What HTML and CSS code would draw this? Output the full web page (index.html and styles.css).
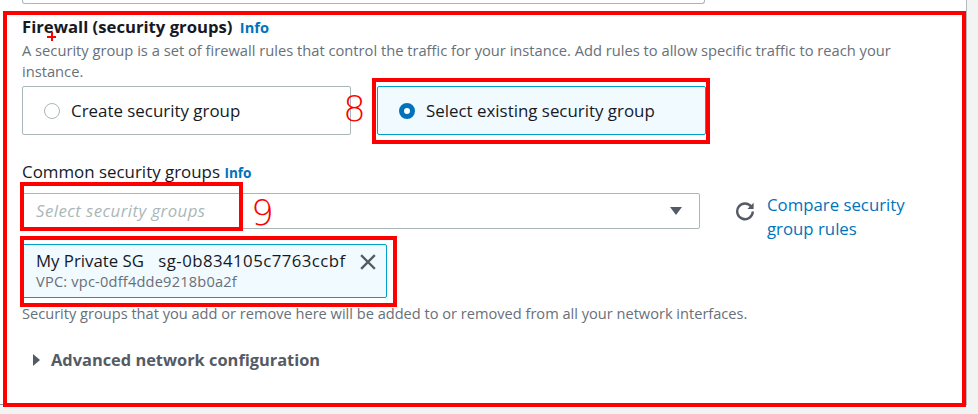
FILE: index.html
```html
<!DOCTYPE html>
<html lang="en">
<head>
<meta charset="utf-8">
<title>Firewall (security groups)</title>
<link rel="stylesheet" href="styles.css">
</head>
<body>
<div class="card">
  <div class="stub"></div>
  <section class="firewall">
    <h2 class="title">Firewall (security groups) <a class="info" href="#">Info</a></h2>
    <p class="desc">A security group is a set of firewall rules that control the traffic for your instance. Add rules to allow specific traffic to reach your instance.</p>
    <div class="tiles">
      <label class="tile"><span class="radio"></span><span>Create security group</span></label>
      <label class="tile selected"><span class="radio"></span><span>Select existing security group</span></label>
    </div>
    <div class="field-label">Common security groups <a class="info small" href="#">Info</a></div>
    <div class="select-row">
      <div class="select">
        <span class="placeholder">Select security groups</span>
        <svg class="caret" width="12" height="8" viewBox="0 0 12 8"><path d="M0 0H12L6 8Z" fill="#545b64"/></svg>
      </div>
      <a class="compare" href="#">
        <svg class="refresh" width="20" height="20" viewBox="0 0 20 20"><path d="M16.2 5.6A7.8 7.8 0 1 0 17.8 10.5" fill="none" stroke="#545b64" stroke-width="2.4"/><path d="M18.6 1.8V8H12.4Z" fill="#545b64"/></svg>
        <span class="compare-text">Compare security<br>group rules</span>
      </a>
    </div>
    <div class="token">
      <div class="token-main">
        <span class="token-name">My Private SG</span>
        <span class="token-id">sg-0b834105c7763ccbf</span>
      </div>
      <div class="token-sub">VPC: vpc-0dff4dde9218b0a2f</div>
      <svg class="token-x" width="16" height="16" viewBox="0 0 16 16"><path d="M2 2L14 14M14 2L2 14" stroke="#545b64" stroke-width="2.4" stroke-linecap="square"/></svg>
    </div>
    <p class="help">Security groups that you add or remove here will be added to or removed from all your network interfaces.</p>
    <div class="advanced"><span class="tri"></span>Advanced network configuration</div>

    <span class="mark-plus"></span>
    <span class="annot box8"></span>
    <span class="annot-num num8">8</span>
    <span class="annot box9"></span>
    <span class="annot-num num9">9</span>
    <span class="annot boxtoken"></span>
  </section>
</div>
</body>
</html>
```

FILE: styles.css
```css
html, body {
  margin: 0;
  padding: 0;
}
body {
  background: #f2f3f3;
  font-family: "Open Sans", "Noto Sans", Arial, sans-serif;
  color: #16191f;
  width: 978px;
  height: 414px;
  overflow: hidden;
}
.card {
  background: #fff;
  width: 967px;
  height: 405px;
  border-right: 1px solid #b5b9bb;
  border-bottom: 1px solid #8d9396;
  box-sizing: border-box;
  overflow: visible;
}
.stub {
  margin-left: 22px;
  width: 683px;
  height: 4px;
  box-sizing: border-box;
  border: 1px solid #aab7b8;
  border-top: none;
  border-radius: 0 0 3px 3px;
}
.firewall {
  position: relative;
  margin: 7px 0 0 3px;
  width: 963px;
  height: 396px;
  box-sizing: border-box;
  border: 4px solid #ff0000;
  padding: 2px 0 0 15px;
}
.title {
  margin: 0;
  font-size: 16.7px;
  line-height: 20px;
  font-weight: 700;
}
.info {
  color: #0073bb;
  text-decoration: none;
  font-weight: 700;
  font-size: 14.6px;
  margin-left: 3px;
}
.info.small {
  font-size: 13.6px;
  margin-left: 0;
}
.desc {
  margin: 3px 0 0 0;
  width: 895px;
  font-size: 14.7px;
  line-height: 21px;
  color: #687078;
}
.tiles {
  display: flex;
  gap: 26px;
  margin-top: 4px;
}
.tile {
  display: flex;
  align-items: center;
  gap: 11px;
  width: 329px;
  height: 49px;
  box-sizing: border-box;
  border: 1px solid #aab7b8;
  border-radius: 2px;
  padding-left: 21px;
  font-size: 16.9px;
}
.radio {
  width: 16px;
  height: 16px;
  box-sizing: border-box;
  border: 1.5px solid #aab7b8;
  border-radius: 50%;
  background: #fff;
}
.tile.selected {
  background: #f1faff;
  border-color: #00a1c9;
}
.tile.selected .radio {
  border: 5px solid #0073bb;
}
.field-label {
  margin-top: 27px;
  font-size: 16.9px;
  line-height: 20px;
}
.select-row {
  display: flex;
  align-items: flex-start;
  margin-top: 10px;
}
.select {
  display: flex;
  align-items: center;
  justify-content: space-between;
  width: 678px;
  height: 36px;
  box-sizing: border-box;
  border: 1px solid #aab7b8;
  border-radius: 2px;
  padding: 0 17px 0 13px;
}
.placeholder {
  font-style: italic;
  color: #aab7b8;
  font-size: 16.8px;
  letter-spacing: 0.45px;
  line-height: 22px;
  margin-top: -1px;
}
.compare {
  display: flex;
  align-items: flex-start;
  gap: 12px;
  margin-left: 35px;
  color: #0073bb;
  text-decoration: none;
  font-size: 16.8px;
  line-height: 24px;
}
.refresh {
  margin-top: 8px;
}
.token {
  position: relative;
  margin-top: 3px;
  width: 365px;
  height: 54px;
  box-sizing: border-box;
  background: #f1faff;
  border: 1px solid #00a1c9;
  border-radius: 2px;
  padding: 5px 0 0 13px;
}
.token-main {
  font-size: 16.8px;
  line-height: 22px;
}
.token-id {
  margin-left: 10px;
  letter-spacing: 0.45px;
}
.token-sub {
  font-size: 14.6px;
  line-height: 18px;
  color: #687078;
  letter-spacing: 0.2px;
}
.token-x {
  position: absolute;
  right: 10px;
  top: 9px;
}
.help {
  margin: 5px 0 0 0;
  font-size: 14.6px;
  line-height: 20px;
  color: #687078;
}
.advanced {
  display: flex;
  align-items: center;
  margin-top: 27px;
  font-size: 16.4px;
  line-height: 20px;
  font-weight: 700;
  color: #545b64;
}
.tri {
  width: 0;
  height: 0;
  border-top: 6px solid transparent;
  border-bottom: 6px solid transparent;
  border-left: 7px solid #545b64;
  margin: 0 11px 0 11px;
}
.mark-plus {
  position: absolute;
  left: 40px;
  top: 17px;
  width: 9px;
  height: 9px;
  background:
    linear-gradient(#f00, #f00) center / 9px 2px no-repeat,
    linear-gradient(#f00, #f00) center / 2px 9px no-repeat;
}
.annot {
  position: absolute;
  border: 4px solid #ff0000;
  box-sizing: border-box;
}
.box8 {
  left: 365px;
  top: 63px;
  width: 338px;
  height: 66px;
}
.box9 {
  left: 13px;
  top: 167px;
  width: 223px;
  height: 49px;
}
.boxtoken {
  left: 13px;
  top: 221px;
  width: 377px;
  height: 71px;
}
.annot-num {
  position: absolute;
  color: #ff0000;
  font-family: "DejaVu Sans", "Liberation Sans", sans-serif;
  font-weight: 200;
  font-size: 36px;
  line-height: 36px;
}
.num8 {
  left: 336px;
  top: 76px;
}
.num9 {
  left: 244px;
  top: 180px;
}
```
